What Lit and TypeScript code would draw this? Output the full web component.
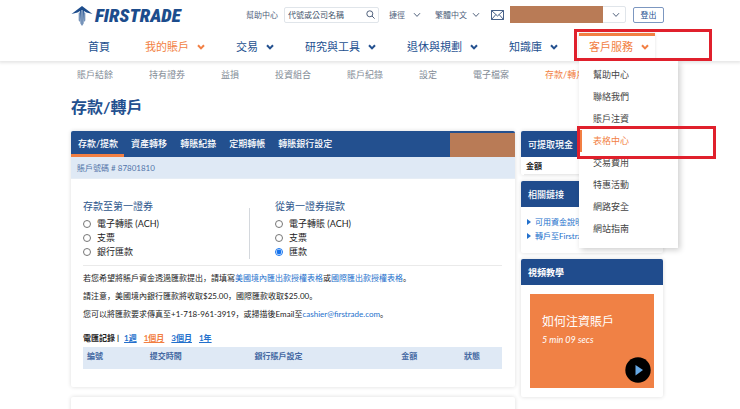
import { LitElement, html, css, svg } from "lit";
import { customElement, state } from "lit/decorators.js";
import { classMap } from "lit/directives/class-map.js";

const NAV = ["首頁", "我的賬戶", "交易", "研究與工具", "退休與規劃", "知識庫"];
const SERVICE_MENU = ["幫助中心", "聯絡我們", "賬戶注資", "表格中心", "交易費用", "特惠活動", "網路安全", "網站指南"];
const SUBNAV = ["賬戶結餘", "持有證券", "益損", "投資組合", "賬戶紀錄", "設定", "電子檔案", "存款/轉戶"];
const TABS = ["存款/提款", "資產轉移", "轉賬紀錄", "定期轉帳", "轉賬銀行設定"];
const DEPOSIT = ["電子轉賬 (ACH)", "支票", "銀行匯款"];
const WITHDRAW = ["電子轉賬 (ACH)", "支票", "匯款"];
const PERIODS = ["1週", "1個月", "3個月", "1年"];
const COLUMNS = ["編號", "提交時間", "銀行賬戶設定", "金額", "狀態"];

const chevron = (cls: string) => html`<svg class=${cls} viewBox="0 0 8 8" aria-hidden="true">
  ${svg`<path d="M1 2.2 L4 5.4 L7 2.2" fill="none" stroke="currentColor" />`}
</svg>`;

@customElement("app-root")
export class AppRoot extends LitElement {
  @state() private service = "表格中心";
  @state() private period = "1個月";

  static styles = css`
    :host {
      display: block;
      position: relative;
      height: 100vh;
      overflow: hidden;
      background: #fff;
      color: #222;
      font: 8px/12px Lato, "Noto Sans CJK TC", sans-serif;
      --blue: #23508f;
      --orange: #f27f43;
      --link: #2370cc;
      --mask: #b97b56;
    }
    * { box-sizing: border-box; }
    a { color: inherit; text-decoration: none; }
    ul { list-style: none; margin: 0; padding: 0; }
    button, input, select { font: inherit; color: inherit; }
    button { cursor: pointer; }

    header {
      position: relative;
      z-index: 2;
      height: 61px;
      background: #fff;
      box-shadow: 0 1px 3px 1px rgba(0, 0, 0, 0.1);
    }
    .top {
      display: flex;
      align-items: center;
      height: 29px;
      padding: 0 76px 0 71px;
      color: #50617c;
    }
    .logo { display: flex; align-items: center; gap: 2px; padding-top: 2px; color: #1c4c8c; }
    .logo svg { width: 22px; height: 20px; }
    .wordmark {
      padding-top: 1px;
      font: italic 900 19px/20px "Roboto Condensed", Roboto, "Liberation Sans", sans-serif;
    }
    .tools { display: flex; align-items: center; margin-left: auto; }
    .search {
      display: flex;
      align-items: center;
      width: 95px;
      height: 16px;
      margin: 0 10px 0 6px;
      padding: 0 3px;
      border: 1px solid #e0e5ea;
      border-radius: 2px;
    }
    .search input {
      flex: 1;
      min-width: 0;
      padding: 0;
      border: 0;
      outline: 0;
      background: none;
    }
    .search input::placeholder { color: #44536b; opacity: 1; }
    .search svg { width: 9px; height: 9px; }
    .plain {
      display: flex;
      align-items: center;
      gap: 8px;
      margin-right: 14px;
      padding: 0;
      border: 0;
      background: none;
    }
    .thin { width: 8px; height: 8px; flex: none; }
    .picker { display: flex; align-items: center; gap: 5px; margin-right: 11px; }
    .picker select { appearance: none; width: 32px; padding: 0; border: 0; background: none; }
    .mail { display: flex; margin-right: 6px; }
    .mail svg { width: 13px; height: 10px; }
    .account {
      display: flex;
      position: relative;
      width: 116px;
      height: 17px;
      margin-right: 7px;
      align-items: center;
      justify-content: flex-end;
      padding-right: 5px;
      border: 1px solid #e0e5ea;
      border-radius: 2px;
    }
    .account select {
      position: absolute;
      inset: 0;
      width: 100%;
      border: 0;
      appearance: none;
      background: none;
    }
    .account .mask { position: absolute; inset: -1px 22px -1px -1px; }
    .mask { background: var(--mask); }
    .logout {
      width: 31px;
      height: 16px;
      padding: 0;
      border: 1px solid #7c97c0;
      border-radius: 2px;
      background: #fff;
      color: var(--blue);
      line-height: 12px;
    }

    .nav {
      display: flex;
      gap: 15px;
      height: 32px;
      padding: 0 78px;
      font-size: 11px;
      line-height: 16px;
      color: var(--blue);
      white-space: nowrap;
    }
    .nav > li {
      position: relative;
      display: flex;
      align-items: center;
      padding: 4px 6px 0 10px;
    }
    .nav > li:first-child { margin-right: 4px; }
    .nav .entry { display: flex; align-items: center; gap: 8px; }
    .bold { width: 8px; height: 8px; stroke-width: 2; }
    .nav .hot { color: var(--orange); }
    .nav > .open {
      height: 28px;
      margin-top: 4px;
      padding-top: 0;
      padding-bottom: 3px;
      border-top: 3px solid var(--orange);
      box-shadow: 0 0 3px rgba(0, 0, 0, 0.12);
    }
    .menu {
      position: absolute;
      top: 100%;
      left: 0;
      width: 99px;
      padding: 3px 0 8px;
      background: #fff;
      box-shadow: 2px 2px 6px rgba(0, 0, 0, 0.2);
      color: #444;
      font-size: 9px;
    }
    .menu a { display: block; padding-left: 11px; border-left: 3px solid transparent; line-height: 22px; }
    .menu a.on { color: var(--orange); border-color: var(--orange); }
    .frame { position: absolute; pointer-events: none; border: 3px solid #e0202c; }
    .frame.tab { inset: -7px auto 0 -5px; width: 138px; }
    .frame.item { top: 65px; left: -2px; width: 139px; height: 33px; }

    .subnav {
      display: flex;
      gap: 36px;
      padding: 4px 77px 0;
      font-size: 9px;
      line-height: 20px;
      color: #828b96;
      white-space: nowrap;
    }
    .subnav a.on { color: var(--orange); }

    .page { padding: 10px 77px 0 71px; }
    h1 { margin: 0 0 12px; font-size: 16px; line-height: 24px; color: var(--blue); }
    .columns {
      display: grid;
      grid-template-columns: minmax(0, 1fr) 142px;
      gap: 6px;
      align-items: start;
    }
    .stack { display: grid; gap: 10px; }
    .side { gap: 6px; }
    .card { border-radius: 2px; background: #fff; box-shadow: 0 0 4px rgba(0, 0, 0, 0.14); }
    .empty { height: 60px; }

    .tabs {
      display: flex;
      height: 26px;
      border-radius: 2px 2px 0 0;
      background: var(--blue);
      color: #fff;
      font-size: 9px;
      font-weight: 500;
      white-space: nowrap;
    }
    .tabs a { padding: 1px 6px 0 7px; line-height: 24px; }
    .tabs a.on { border-bottom: 3px solid var(--orange); }
    .tabs .mask { width: 65px; margin: 2px 0 0 auto; }
    .number { padding: 5px 6px 4px; background: #dfe9f5; color: #5274a8; border-bottom: 1px solid #e6edf5; }
    .body {
      padding: 20px 13px 18px 12px;
      font-family: Lato, "Noto Sans CJK SC", sans-serif;
    }
    .choices { display: grid; grid-template-columns: 166px 1fr; padding-bottom: 6px; border-bottom: 1px solid #eaeaea; }
    fieldset { margin: 0; padding: 0 0 0 25px; border: 0; border-left: 1px solid #d4d8dd; min-width: 0; }
    fieldset:first-child { padding-left: 0; border-left: 0; }
    legend { padding: 0 0 4px; font-size: 10px; line-height: 14px; color: #2d568c; }
    .choice { display: flex; align-items: center; gap: 6px; font-size: 9px; line-height: 14px; }
    .choice input { width: 8px; height: 8px; margin: 0; accent-color: #1573ee; }
    p { margin: 6px 0; }
    .body a { color: var(--link); }
    .history { display: flex; gap: 7px; margin: 12px 0 3px; font-weight: 700; }
    .body .history a { text-decoration: underline; }
    .body .history a.on { color: var(--orange); }
    .history span { margin-right: -2px; }
    table { width: 100%; table-layout: fixed; border-collapse: collapse; background: #dfe9f5; color: #4569a3; }
    th { height: 22px; padding: 0 0 4px 4px; text-align: left; }
    .c0 { width: 15%; }
    .c1 { width: 25%; }
    .c2 { width: 35%; }
    .c3 { width: 15%; }

    h2 {
      margin: 0;
      padding: 1px 7px 0;
      border-radius: 2px 2px 0 0;
      background: #204c8d;
      color: #fff;
      font-size: 9px;
      font-weight: 500;
      line-height: 25px;
    }
    h2.strong { font-weight: 700; }
    .cash { margin: 0 3px; padding: 3px 2px 2px; border-bottom: 1px solid #eaeaea; font-weight: 700; }
    .links { padding: 8px 6px 10px; color: var(--link); line-height: 14px; white-space: nowrap; }
    .links a { display: flex; align-items: center; gap: 4px; }
    .links svg { width: 4px; height: 6px; }
    .video { padding: 9px; }
    .poster {
      display: flex;
      flex-direction: column;
      width: 100%;
      height: 94px;
      padding: 20px 3px 5px 12px;
      border: 0;
      background: #f08145;
      color: #fff;
      text-align: left;
    }
    .poster strong { font-size: 12px; font-weight: 400; line-height: 16px; }
    .poster em { margin-top: 4px; font-size: 9px; line-height: 12px; }
    .poster svg { width: 26px; height: 26px; margin: auto 0 0 auto; flex: none; }
  `;

  private choices(title: string, name: string, items: string[], picked: string) {
    return html`<fieldset>
      <legend>${title}</legend>
      ${items.map(
        (t) => html`<label class="choice"><input type="radio" name=${name} .checked=${t === picked} />${t}</label>`
      )}
    </fieldset>`;
  }

  private header() {
    return html`<header>
      <div class="top">
        <a class="logo" href="#" aria-label="Firstrade">
          <svg viewBox="0 0 22 20" fill="currentColor" aria-hidden="true">
            <path d="M11 0 L21.5 8 L15.5 6.6 L12.9 5 L12.4 17.5 L11.4 20 L11.4 4 L10.6 4 L10.6 20 L9.6 17.5 L9.1 5 L6.5 6.6 L.5 8 Z" />
            <path d="M8.6 6.2 V16 L7.8 14.4 V6.8 Z M13.4 6.2 V16 L14.2 14.4 V6.8 Z" />
          </svg>
          <span class="wordmark">FIRSTRADE</span>
        </a>
        <div class="tools">
          <a href="#">幫助中心</a>
          <label class="search">
            <input type="text" placeholder="代號或公司名稱" aria-label="代號或公司名稱" />
            <svg viewBox="0 0 9 9" fill="none" stroke="currentColor" aria-hidden="true">
              <circle cx="3.8" cy="3.8" r="3" /><path d="M6 6 L8.6 8.6" />
            </svg>
          </label>
          <button class="plain">捷徑 ${chevron("thin")}</button>
          <label class="picker">
            <select aria-label="語言"><option>繁體中文</option></select>${chevron("thin")}
          </label>
          <a class="mail" href="#" aria-label="郵件">
            <svg viewBox="0 0 13 10" fill="none" stroke="#33507d" aria-hidden="true">
              <path d="M.5 .5 H12.5 V9.5 H.5 Z M.5 .5 L6.5 6 L12.5 .5 M.5 9.5 L4.8 4.6 M12.5 9.5 L8.2 4.6" stroke-width=".9" />
            </svg>
          </a>
          <div class="account">
            <select aria-label="賬戶"></select>
            <span class="mask"></span>
            ${chevron("thin")}
          </div>
          <button class="logout">登出</button>
        </div>
      </div>
      <ul class="nav">
        ${NAV.map(
          (t, i) => html`<li>
            <a href="#" class=${classMap({ entry: true, hot: i === 1 })}>${t}${i ? chevron("bold") : ""}</a>
          </li>`
        )}
        <li class="open">
          <a href="#" class="entry hot">客戶服務${chevron("bold")}</a>
          <ul class="menu">
            ${SERVICE_MENU.map(
              (t) => html`<li>
                <a href="#" class=${classMap({ on: t === this.service })} @click=${() => (this.service = t)}>${t}</a>
              </li>`
            )}
            <li class="frame item" aria-hidden="true"></li>
          </ul>
          <span class="frame tab"></span>
        </li>
      </ul>
    </header>`;
  }

  render() {
    return html`
      ${this.header()}
      <nav class="subnav">
        ${SUBNAV.map((t, i) => html`<a href="#" class=${classMap({ on: i === SUBNAV.length - 1 })}>${t}</a>`)}
      </nav>
      <main class="page">
        <h1>存款/轉戶</h1>
        <div class="columns">
          <div class="stack">
            <section class="card">
              <nav class="tabs">
                ${TABS.map((t, i) => html`<a href="#" class=${classMap({ on: i === 0 })}>${t}</a>`)}
                <span class="mask"></span>
              </nav>
              <div class="number">賬戶號碼 # 87801810</div>
              <div class="body">
                <div class="choices">
                  ${this.choices("存款至第一證券", "deposit", DEPOSIT, "")}
                  ${this.choices("從第一證券提款", "withdraw", WITHDRAW, "匯款")}
                </div>
                <p>若您希望將賬戶資金透過匯款提出，請填寫<a href="#">美國境內匯出款授權表格</a>或<a href="#">國際匯出款授權表格</a>。</p>
                <p>請注意，美國境內銀行匯款將收取$25.00，國際匯款收取$25.00。</p>
                <p>您可以將匯款要求傳真至+1-718-961-3919，或掃描後Email至<a href="mailto:cashier@firstrade.com">cashier@firstrade.com</a>。</p>
                <div class="history">
                  <span>電匯記錄 |</span>
                  ${PERIODS.map(
                    (t) => html`<a href="#" class=${classMap({ on: t === this.period })} @click=${() => (this.period = t)}>${t}</a>`
                  )}
                </div>
                <table>
                  <thead>
                    <tr>${COLUMNS.map((t, i) => html`<th scope="col" class="c${i}">${t}</th>`)}</tr>
                  </thead>
                </table>
              </div>
            </section>
            <section class="card empty"></section>
          </div>
          <aside class="stack side">
            <section class="card">
              <h2>可提取現金</h2>
              <div class="cash">金額</div>
            </section>
            <section class="card">
              <h2>相關鏈接</h2>
              <div class="links">
                ${["可用資金說明", "轉戶至Firstrade"].map(
                  (t) => html`<a href="#"><svg viewBox="0 0 4 6" fill="currentColor" aria-hidden="true"><path d="M0 0 L4 3 L0 6 Z" /></svg>${t}</a>`
                )}
              </div>
            </section>
            <section class="card">
              <h2 class="strong">視頻教學</h2>
              <div class="video">
                <button class="poster">
                  <strong>如何注資賬戶</strong>
                  <em>5 min 09 secs</em>
                  <svg viewBox="0 0 26 26" aria-hidden="true">
                    <circle cx="13" cy="13" r="12.7" /><path d="M10.5 8 L18 13 L10.5 18.5 Z" fill="#66a9e6" />
                  </svg>
                </button>
              </div>
            </section>
          </aside>
        </div>
      </main>
    `;
  }
}
